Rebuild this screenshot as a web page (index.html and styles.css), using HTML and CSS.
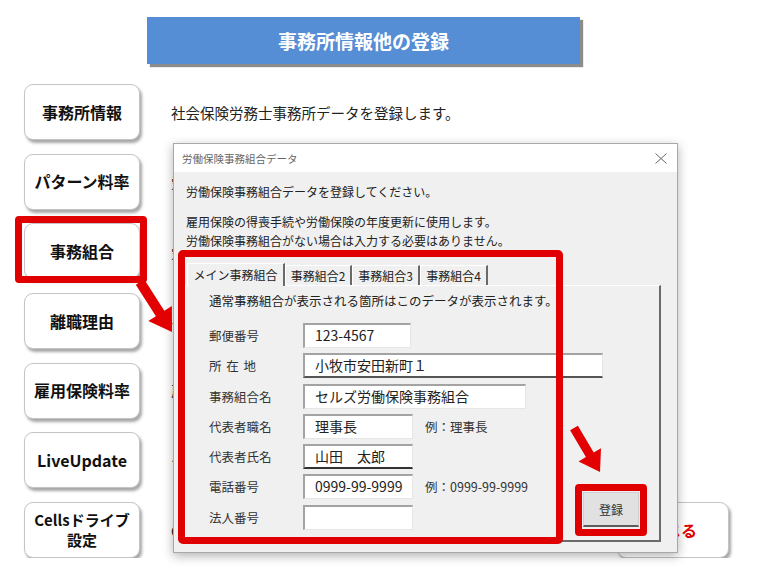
FILE: index.html
```html
<!DOCTYPE html>
<html lang="ja">
<head>
  <meta charset="UTF-8">
  <title>事務所情報他の登録</title>
  <link rel="stylesheet" href="styles.css">
</head>
<body>

  <div class="banner">事務所情報他の登録</div>

  <div class="menu">
    <div class="row">
      <div class="menu-btn">事務所情報</div>
      <p class="desc">社会保険労務士事務所データを登録します。</p>
    </div>
    <div class="row">
      <div class="menu-btn">パターン料率</div>
      <p class="desc">労</p>
    </div>
    <div class="row">
      <div class="menu-btn current">事務組合</div>
      <p class="desc">労</p>
    </div>
    <div class="row">
      <div class="menu-btn">離職理由</div>
      <p class="desc">イ</p>
    </div>
    <div class="row">
      <div class="menu-btn">雇用保険料率</div>
      <p class="desc">雇</p>
    </div>
    <div class="row">
      <div class="menu-btn">LiveUpdate</div>
      <p class="desc">ー</p>
    </div>
    <div class="row">
      <div class="menu-btn two-line"><span>Cellsドライブ</span><span>設定</span></div>
      <p class="desc">C</p>
      <div class="menu-btn close-btn">閉じる</div>
    </div>
  </div>

  <div class="dialog">
    <div class="titlebar">
      <span>労働保険事務組合データ</span>
      <svg class="close-x" width="12" height="11" viewBox="0 0 12 11">
        <line x1="0.5" y1="0.5" x2="11.5" y2="10.5" stroke="#666" stroke-width="1"/>
        <line x1="11.5" y1="0.5" x2="0.5" y2="10.5" stroke="#666" stroke-width="1"/>
      </svg>
    </div>

    <div class="intro">
      <p class="lead">労働保険事務組合データを登録してください。</p>
      <p class="note">雇用保険の得喪手続や労働保険の年度更新に使用します。<br>労働保険事務組合がない場合は入力する必要はありません。</p>
    </div>

    <div class="tabs-box">
      <div class="tab-strip">
        <div class="tab active">メイン事務組合</div>
        <div class="tab w67">事務組合2</div>
        <div class="tab">事務組合3</div>
        <div class="tab">事務組合4</div>
      </div>
      <div class="panel">
        <div class="panel-main">
          <p class="panel-desc">通常事務組合が表示される箇所はこのデータが表示されます。</p>
          <div class="form">
            <span class="label">郵便番号</span>
            <div class="field-wrap"><div class="field zip">123-4567</div></div>

            <span class="label spaced">所 在 地</span>
            <div class="field-wrap"><div class="field addr">小牧市安田新町１</div></div>

            <span class="label">事務組合名</span>
            <div class="field-wrap"><div class="field union">セルズ労働保険事務組合</div></div>

            <span class="label">代表者職名</span>
            <div class="field-wrap"><div class="field">理事長</div><span class="hint">例：理事長</span></div>

            <span class="label">代表者氏名</span>
            <div class="field-wrap"><div class="field name">山田　太郎</div></div>

            <span class="label">電話番号</span>
            <div class="field-wrap"><div class="field">0999-99-9999</div><span class="hint">例：0999-99-9999</span></div>

            <span class="label">法人番号</span>
            <div class="field-wrap"><div class="field"></div></div>
          </div>
        </div>
        <div class="submit">登録</div>
      </div>
    </div>

    <div class="mark-frame"></div>
  </div>

  <svg class="arrows" width="774" height="578" viewBox="0 0 774 578">
    <polygon points="144.2,279.3 164.3,310.8 171.9,305.9 172,332 148.3,321.1 155.9,316.2 135.8,284.7" fill="#e30000"/>
    <polygon points="577.9,425.7 593.7,452.5 601,448.2 600,472 578.6,461.4 585.9,457.1 570.1,430.3" fill="#e30000"/>
  </svg>

</body>
</html>
```

FILE: styles.css
```css
body {
  margin: 0;
  font-family: "Noto Sans CJK JP", "Noto Sans", sans-serif;
  background: #fff;
  color: #222;
  overflow: hidden;
}
.banner {
  margin: 17px 0 0 147px;
  width: 433px;
  height: 47px;
  background: #558ed5;
  color: #fff;
  font-weight: bold;
  font-size: 19px;
  display: flex;
  align-items: center;
  justify-content: center;
  box-shadow: 3px 3px 1px #8c8c8c;
}
.menu {
  margin-top: 20px;
  display: flex;
  flex-direction: column;
  gap: 13.7px;
}
.row {
  display: flex;
  align-items: center;
  height: 56px;
}
.menu-btn {
  box-sizing: border-box;
  position: relative;
  margin-left: 24px;
  width: 116px;
  height: 56px;
  border: 1px solid #c4c4c4;
  border-radius: 9px;
  background: #fff;
  box-shadow: 2px 3px 3px rgba(0,0,0,0.35);
  display: flex;
  align-items: center;
  justify-content: center;
  text-align: center;
  font-weight: bold;
  font-size: 16px;
  line-height: 19px;
  color: #111;
  flex: none;
}
.menu-btn.two-line {
  flex-direction: column;
  font-size: 15px;
  line-height: 20px;
}
.menu-btn.current::after {
  content: "";
  position: absolute;
  left: -10px;
  top: -8px;
  right: -8px;
  bottom: -5px;
  border: 7px solid #e00000;
  border-radius: 4px;
}
.desc {
  margin: 0 0 0 31px;
  font-size: 14.5px;
  white-space: nowrap;
}
.close-btn {
  margin-left: auto;
  margin-right: 45px;
  width: 112px;
  color: #e00000;
}

/* dialog window */
.dialog {
  position: absolute;
  left: 173px;
  top: 143px;
  width: 505px;
  height: 410px;
  box-sizing: border-box;
  border: 1px solid #a8a8a8;
  background: #f0f0f0;
  box-shadow: 0 3px 10px rgba(0,0,0,0.3);
}
.titlebar {
  height: 28px;
  background: #fff;
  display: flex;
  align-items: center;
  justify-content: space-between;
  padding: 0 10px 0 8px;
  font-size: 10.5px;
  color: #666;
}
.intro {
  padding: 11px 0 0 12px;
}
.lead {
  margin: 0;
  font-size: 12px;
  line-height: 18px;
}
.note {
  margin: 11px 0 0;
  font-size: 12px;
  line-height: 19px;
}
.tabs-box {
  margin: 13px 0 0 11px;
  width: 476px;
}
.tab-strip {
  display: flex;
  height: 22px;
  padding-left: 2px;
}
.tab {
  box-sizing: border-box;
  margin-top: 2px;
  width: 68px;
  height: 20px;
  border-top: 1px solid #fff;
  border-left: 1px solid #fff;
  border-right: 2px solid #6a6a6a;
  font-size: 12px;
  display: flex;
  align-items: center;
  justify-content: center;
}
.tab.w67 {
  width: 67px;
}
.tab.active {
  position: relative;
  z-index: 1;
  margin-top: 0;
  width: 98px;
  height: 23px;
  background: #f0f0f0;
  padding-bottom: 1px;
}
.panel {
  box-sizing: border-box;
  height: 257px;
  border-top: 1px solid #fff;
  border-left: 1px solid #fff;
  border-right: 2px solid #6a6a6a;
  border-bottom: 2px solid #6a6a6a;
  display: flex;
}
.panel-main {
  flex: 1;
  min-width: 0;
  padding: 6px 0 0 23px;
  white-space: nowrap;
}
.panel-desc {
  margin: 0;
  font-size: 12.5px;
  line-height: 18px;
}
.form {
  margin-top: 13px;
  display: grid;
  grid-template-columns: 94px auto;
  grid-auto-rows: 25px;
  row-gap: 5.3px;
  align-items: center;
}
.label {
  font-size: 12.5px;
  color: #333;
}
.label.spaced {
  word-spacing: 2px;
}
.field-wrap {
  display: flex;
  align-items: center;
}
.field {
  box-sizing: border-box;
  flex: none;
  width: 110px;
  height: 25px;
  background: #fff;
  border-top: 2px solid #a3a3a3;
  border-left: 2px solid #a3a3a3;
  border-right: 1px solid #e6e6e6;
  border-bottom: 1px solid #e6e6e6;
  padding-left: 10px;
  font-size: 14px;
  line-height: 21px;
  white-space: nowrap;
}
.field.zip { width: 108px; }
.field.addr { width: 300px; border-bottom: 2px solid #555; }
.field.union { width: 223px; }
.field.name { border-bottom: 2px solid #333; }
.hint {
  margin-left: 12px;
  font-size: 12.5px;
  color: #333;
}
.submit {
  position: relative;
  flex: none;
  align-self: flex-end;
  margin: 0 20px 13px 0;
  box-sizing: border-box;
  width: 56px;
  height: 35px;
  background: #e1e1e1;
  border: 1px solid #cfcfcf;
  border-bottom: 2px solid #5c5c5c;
  font-size: 12px;
  color: #333;
  display: flex;
  align-items: center;
  justify-content: center;
}
.submit::after {
  content: "";
  position: absolute;
  left: -9px;
  top: -9px;
  right: -9px;
  bottom: -11px;
  border: 7px solid #e00000;
  border-radius: 4px;
}
.mark-frame {
  position: absolute;
  left: 4px;
  top: 106px;
  width: 385px;
  height: 294px;
  box-sizing: border-box;
  border: 7px solid #e00000;
  border-radius: 5px;
}
.arrows {
  position: absolute;
  left: 0;
  top: 0;
  pointer-events: none;
}
```
